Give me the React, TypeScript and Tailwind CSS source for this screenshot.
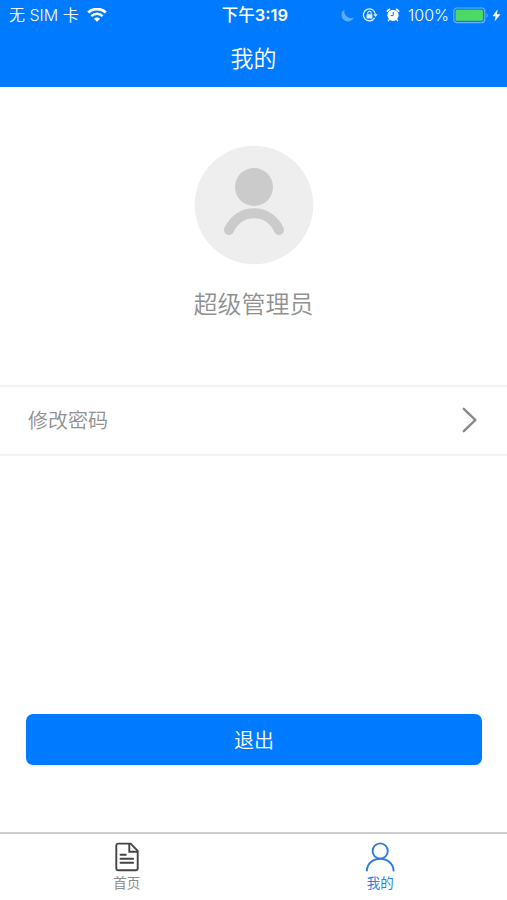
import type { ReactNode } from "react";

const WifiIcon = () => (
  <svg width="20" height="14" viewBox="0 0 20 14" fill="none" stroke="#fff">
    <path d="M1.2 4.6a12.6 12.6 0 0 1 17.6 0" strokeWidth="2.8" />
    <path d="M4.4 8.1a8 8 0 0 1 11.2 0" strokeWidth="2.4" />
    <path d="M10 13.8 6.9 10.8a4.4 4.4 0 0 1 6.2 0z" fill="#fff" stroke="none" />
  </svg>
);

const MoonIcon = () => (
  <svg width="13" height="13" viewBox="0 0 13 13" fill="#5facff">
    <path d="M3.6.5A6.4 6.4 0 1 0 12.8 8.4 6.6 6.6 0 0 1 3.6.5z" />
  </svg>
);

const RotationLockIcon = () => (
  <svg width="16" height="14" viewBox="0 0 16 14" fill="none" stroke="#e3f1ff">
    <path d="M12.6 9.9A6 6 0 1 1 13.4 6.3" strokeWidth="1.3" />
    <path d="M11.3 6.2h4.4l-2.2 2.8z" fill="#e3f1ff" stroke="none" />
    <rect x="4.6" y="6.2" width="5.8" height="4.3" rx=".6" fill="#e3f1ff" stroke="none" />
    <path d="M5.8 6.4V5a1.7 1.7 0 0 1 3.4 0v1.4" strokeWidth="1.1" />
  </svg>
);

const AlarmIcon = () => (
  <svg width="14" height="14" viewBox="0 0 14 14" fill="none">
    <circle cx="7" cy="7.3" r="5.6" fill="#fff" />
    <path d="M.9 3.8A10 10 0 0 1 3.9 1M13.1 3.8a10 10 0 0 0-3-2.8" stroke="#fff" strokeWidth="1.7" />
    <path d="m3.4 11.3-1.3 1.9M10.6 11.3l1.3 1.9" stroke="#fff" strokeWidth="1.3" />
    <path d="M7.2 4v3.6H4.6" stroke="#007aff" strokeWidth="1" />
  </svg>
);

const BatteryIcon = () => (
  <svg width="36" height="17" viewBox="0 0 36 17" fill="none">
    <rect x=".8" y="1" width="31" height="14.6" rx="3" stroke="#66b0ff" strokeWidth="1.2" />
    <rect x="2.6" y="2.8" width="27.4" height="11" rx="1.4" fill="#4cd964" />
    <path d="M33.5 6v4.8c1.8-.8 1.8-4 0-4.8z" fill="#66b0ff" />
  </svg>
);

const BoltIcon = () => (
  <svg width="9" height="13" viewBox="0 0 9 13" fill="#fff">
    <path d="M5.6.3.5 7.2h3.1L2.6 12.5 8.5 5.2H5z" />
  </svg>
);

const Avatar = () => (
  <svg width="120" height="120" viewBox="0 0 120 120" fill="none">
    <circle cx="60" cy="60" r="59.3" fill="#eee" />
    <circle cx="60" cy="42" r="19" fill="#cbcbcb" />
    <path d="M35 85C39.8 75 48.6 68.3 60 68.3S80.2 75 85 85" stroke="#cbcbcb" strokeWidth="10" strokeLinecap="round" />
  </svg>
);

const DocumentIcon = () => (
  <svg width="24" height="30" viewBox="0 0 24 30" fill="none" stroke="#444" strokeWidth="1.9">
    <path d="M15.6 1.6H3.3A2 2 0 0 0 1.3 3.6v22.6a2 2 0 0 0 2 2h17.4a2 2 0 0 0 2-2V8.8z" strokeLinejoin="round" />
    <path d="M14.3 1.8v8h8.2" />
    <path d="M5.5 12.8h5.4M5.5 16.8h12.6M5.5 20.8h12.6" strokeLinecap="round" />
  </svg>
);

const PersonIcon = () => (
  <svg width="30" height="30" viewBox="0 0 30 30" fill="none" stroke="#2d7be0" strokeWidth="1.9">
    <circle cx="15.2" cy="9" r="7.6" />
    <path d="M1.8 28.6C2.2 21.6 7.9 16.7 15.2 16.7s13 4.9 13.4 11.9" strokeLinecap="round" />
  </svg>
);

type TabProps = {
  icon: ReactNode;
  label: string;
  active?: boolean;
};

const Tab = ({ icon, label, active }: TabProps) => (
  <button
    type="button"
    className={`flex flex-1 flex-col items-center pt-2 text-[13.5px] leading-[22px] ${
      active ? "text-[#2d7fe8]" : "text-[#8c8c8c]"
    }`}
  >
    {icon}
    <span>{label}</span>
  </button>
);

const StatusBar = () => (
  <div className="flex h-[30px] items-center text-[16px] leading-none">
    <div className="flex flex-1 items-center gap-2 pl-[9px]">
      <span className="font-[350]">无 SIM 卡</span>
      <WifiIcon />
    </div>
    <span className="text-[16.5px] font-medium">
      下午<span className="font-semibold">3:19</span>
    </span>
    <div className="flex flex-1 items-center justify-end pr-1.5">
      <MoonIcon />
      <span className="ml-2">
        <RotationLockIcon />
      </span>
      <span className="ml-2">
        <AlarmIcon />
      </span>
      <span className="ml-2 font-[350]">100%</span>
      <span className="ml-1">
        <BatteryIcon />
      </span>
      <span className="ml-[3px]">
        <BoltIcon />
      </span>
    </div>
  </div>
);

export default function App() {
  return (
    <div className="flex h-[900px] w-[507px] flex-col overflow-hidden bg-white font-['Inter','Noto_Sans_CJK_SC',sans-serif]">
      <header className="h-[87px] shrink-0 bg-[#007aff] text-white">
        <StatusBar />
        <h1 className="pt-2 text-center text-[23px] leading-[42px] font-[350]">我的</h1>
      </header>

      <main className="flex flex-1 flex-col">
        <section className="flex flex-col items-center pt-[58px]">
          <Avatar />
          <p className="mt-[22px] text-2xl leading-9 font-[350] text-[#909090]">超级管理员</p>
        </section>

        <button
          type="button"
          className="mt-[62px] flex h-[71px] items-center justify-between border-y-2 border-[#f4f4f4] pr-[29px] pl-7 text-xl font-[350] text-[#909090]"
        >
          <span>修改密码</span>
          <svg
            className="mb-0.5"
            width="17"
            height="26"
            viewBox="0 0 17 26"
            fill="none"
            stroke="#888"
            strokeWidth="2.4"
          >
            <path d="M2.8 1.8 14.3 13 2.8 24.2" strokeLinecap="round" />
          </svg>
        </button>

        <button
          type="button"
          className="mt-auto mr-[25px] mb-[67px] ml-[26px] h-[51px] rounded-[7px] bg-[#007aff] pt-0.5 text-xl font-[350] text-white"
        >
          退出
        </button>
      </main>

      <nav className="flex h-[68px] shrink-0 border-t-2 border-[#cdcdcd]">
        <Tab icon={<DocumentIcon />} label="首页" />
        <Tab icon={<PersonIcon />} label="我的" active />
      </nav>
    </div>
  );
}
